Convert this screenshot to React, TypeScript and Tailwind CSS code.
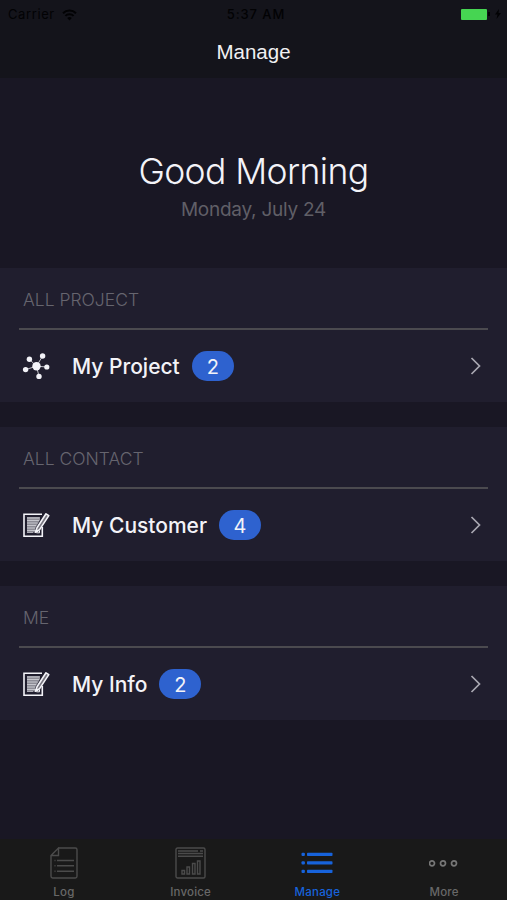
import { useState } from 'react'

type Tab = 'log' | 'invoice' | 'manage' | 'more'

function WifiIcon() {
  return (
    <svg className="w-[15px] h-[12px]" viewBox="0 0 15 12" fill="none" stroke="currentColor" strokeWidth={2}>
      <path d="M1 4.3a9.2 9.2 0 0 1 13 0M3.4 6.9a5.8 5.8 0 0 1 8.2 0" />
      <path d="M7.5 11.5L5.2 9.1a3.3 3.3 0 0 1 4.6 0z" fill="currentColor" stroke="none" />
    </svg>
  )
}

function NetworkIcon() {
  return (
    <svg className="w-[28px] h-[28px]" viewBox="0 0 28 28" fill="currentColor">
      <path
        d="M14.5 14.2L7.4 7.3M14.5 14.2L20.6 4M14.5 14.2L25 15M14.5 14.2L17 24.4M14.5 14.2L3.6 17.6"
        stroke="currentColor"
        strokeWidth={1}
        opacity={0.75}
      />
      <circle cx="14.5" cy="14.2" r="4.2" />
      <circle cx="7.4" cy="7.3" r="2.7" />
      <circle cx="20.6" cy="4" r="2.7" />
      <circle cx="24.8" cy="15" r="2.6" />
      <circle cx="17" cy="24.4" r="2.7" />
      <circle cx="3.6" cy="17.6" r="2.7" />
    </svg>
  )
}

function NoteIcon() {
  return (
    <svg className="w-[28px] h-[28px]" viewBox="0 0 28 28" fill="none" stroke="currentColor">
      <path d="M20 3.2H2v22h18.3V16" strokeWidth={1.6} />
      <path d="M5 6h13v3l-4.5 8v4.5H5z" fill="#8d8c96" stroke="none" />
      <path d="M5 7h12.5M5 9.5h12M5 12h10.5M5 14.5h9M5 17h8M5 19.5h8M5 21.5h6" strokeWidth={0.8} opacity={0.7} />
      <path d="M15 16.8L24 2.8l2.8 1.8-9.2 14-3.8 2.4z" fill="#77757f" strokeWidth={1.6} strokeLinejoin="round" />
      <path d="M13 21.5l1-2.5 2.2 1.3z" strokeWidth={1} fill="currentColor" />
      <path d="M17.5 19.5v2.3h-3" strokeWidth={1} />
    </svg>
  )
}

function LogIcon() {
  return (
    <svg className="w-[28px] h-[32px]" viewBox="0 0 28 32" fill="none" stroke="currentColor" strokeWidth={1.4}>
      <path d="M8.5 1h16.8q1.7 0 1.7 1.7v26.6q0 1.7-1.7 1.7H2.7Q1 31 1 29.3V8.5L8.5 1v7.5H1" />
      <path d="M4.5 13.5h1M7 13.5h17M4.5 18.8h1M7 18.8h17M4.5 24.2h1M7 24.2h17" strokeWidth={1.5} />
    </svg>
  )
}

function InvoiceIcon() {
  return (
    <svg className="w-[31px] h-[32px]" viewBox="0 0 31 32" fill="none" stroke="currentColor" strokeWidth={1.4}>
      <rect x="1" y="1" width="29" height="30" rx="1.5" />
      <path d="M3 4h20M3 6.6h25M3 9.2h25M25 4h3" strokeWidth={1.5} />
      <path d="M7 23.5h2.5V27H7zM12 20h2.5v7H12zM17.5 16.5H20V27h-2.5zM22.5 14H25v13h-2.5z" />
    </svg>
  )
}

function ManageIcon() {
  return (
    <svg className="w-[32px] h-[22px]" viewBox="0 0 32 22" fill="currentColor">
      <rect x="0.5" y="0.7" width="3.4" height="3.3" rx="1" />
      <rect x="0.5" y="9.2" width="3.4" height="3.3" rx="1" />
      <rect x="0.5" y="17.7" width="3.4" height="3.3" rx="1" />
      <rect x="6" y="0.7" width="25.5" height="3.3" rx="0.8" />
      <rect x="6" y="9.2" width="25.5" height="3.3" rx="0.8" />
      <rect x="6" y="17.7" width="25.5" height="3.3" rx="0.8" />
    </svg>
  )
}

function MoreIcon() {
  return (
    <svg className="w-[30px] h-[8px]" viewBox="0 0 30 8" fill="none" stroke="currentColor" strokeWidth={1.7}>
      <circle cx="3" cy="4.3" r="2.5" />
      <circle cx="14" cy="4.3" r="2.5" />
      <circle cx="25" cy="4.3" r="2.5" />
    </svg>
  )
}

function App() {
  const [activeTab, setActiveTab] = useState<Tab>('manage')

  const sections = [
    { title: 'ALL PROJECT', name: 'My Project', count: 2, icon: <NetworkIcon /> },
    { title: 'ALL CONTACT', name: 'My Customer', count: 4, icon: <NoteIcon /> },
    { title: 'ME', name: 'My Info', count: 2, icon: <NoteIcon /> },
  ]

  const tabs = [
    { id: 'log' as Tab, name: 'Log', icon: <LogIcon />, color: 'text-[#4b4b4b]' },
    { id: 'invoice' as Tab, name: 'Invoice', icon: <InvoiceIcon />, color: 'text-[#4b4b4b]' },
    { id: 'manage' as Tab, name: 'Manage', icon: <ManageIcon />, color: 'text-[#777]' },
    { id: 'more' as Tab, name: 'More', icon: <MoreIcon />, color: 'text-[#777]' },
  ]

  return (
    <div className="w-full h-[900px] flex flex-col bg-[#191724] font-[Inter,sans-serif] overflow-hidden">
      <header className="h-[78px] shrink-0 bg-[#14141b]">
        <div className="h-[28px] grid grid-cols-3 items-center pl-[8px] pr-[6px] text-[#020204] text-[13px]">
          <div className="flex items-center gap-[7px] pt-[1px]">
            <span className="tracking-[0.6px]">Carrier</span>
            <WifiIcon />
          </div>
          <span className="text-center font-medium tracking-[0.9px] pt-[2px] pl-[3px]">5:37 AM</span>
          <div className="flex items-center justify-end">
            <div className="w-[26px] h-[11px] rounded-[1px] bg-[#46d552]"></div>
            <div className="w-[2px] h-[4px] ml-[1px] bg-[#020204]"></div>
            <svg className="w-[6px] h-[10px] ml-[5px]" viewBox="0 0 6 10" fill="currentColor">
              <path d="M4 0L0 5.5h2.5L1.5 10 6 4H3.5z" />
            </svg>
          </div>
        </div>
        <h1 className="h-[49px] flex items-center justify-center text-[20.5px] text-[#f1f1f3] font-['Liberation_Sans',sans-serif]">
          Manage
        </h1>
      </header>

      <div className="h-[190px] shrink-0 flex flex-col items-center pt-[71px]">
        <h2 className="text-[35.5px] leading-[46px] tracking-[-0.6px] font-light text-[#f3f3f8]">Good Morning</h2>
        <p className="text-[19px] leading-[30px] tracking-[-0.25px] text-[#605f67]">Monday, July 24</p>
      </div>

      <main className="flex-1 flex flex-col gap-[25px]">
        {sections.map((section) => (
          <section key={section.title} className="h-[134px] px-[19px] bg-[#201e2e]">
            <h3 className="h-[62px] pt-[4px] pl-[4px] flex items-center border-b-2 border-[#4b4a4f] text-[17.5px] font-light text-[#66656f]">
              {section.title}
            </h3>
            <div className="h-[72px] flex items-center pl-[3px] pr-[7px] text-[#f3f3f8]">
              {section.icon}
              <span className="pt-[2px] ml-[22px] text-[21px] font-medium">{section.name}</span>
              <span className="ml-[12px] w-[42px] h-[30px] pt-[1px] rounded-full bg-[#2e62cf] flex items-center justify-center text-[20px]">
                {section.count}
              </span>
              <svg className="ml-auto w-[11px] h-[18px] text-[#a9a8b2]" viewBox="0 0 11 18" fill="none" stroke="currentColor" strokeWidth={1.7}>
                <path d="M1.5 1l8 8-8 8" />
              </svg>
            </div>
          </section>
        ))}
      </main>

      <nav className="h-[61px] shrink-0 grid grid-cols-4 bg-[#191919]">
        {tabs.map((tab) => (
          <button
            key={tab.id}
            onClick={() => setActiveTab(tab.id)}
            className={`flex flex-col items-center pl-[1px] ${activeTab === tab.id ? 'text-[#1763dc]' : tab.color}`}
          >
            <span className="h-[32px] mt-[8px] flex items-center">{tab.icon}</span>
            <span className={`mt-[6px] text-[11.5px] leading-[14px] font-medium tracking-[0.2px] ${activeTab === tab.id ? '' : 'text-[#686868]'}`}>
              {tab.name}
            </span>
          </button>
        ))}
      </nav>
    </div>
  )
}

export default App
